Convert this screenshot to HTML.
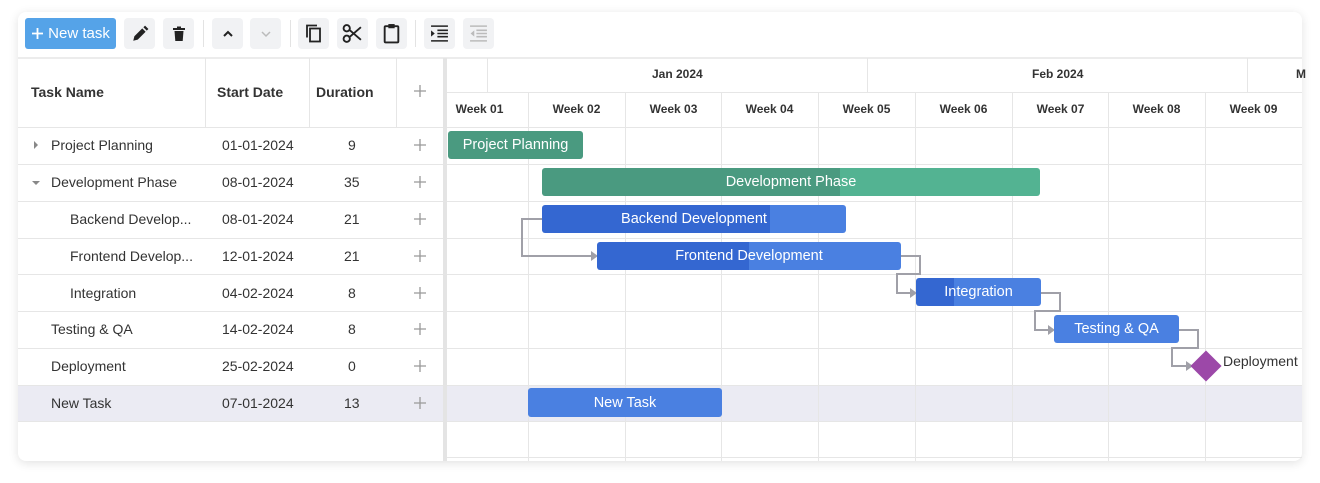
<!DOCTYPE html>
<html><head><meta charset="utf-8"><style>
*{box-sizing:border-box;margin:0;padding:0}
body{width:1320px;height:483px;background:#fff;font-family:"Liberation Sans",sans-serif;color:#333;position:relative;overflow:hidden}
.a{position:absolute}
.card{left:18px;top:12px;width:1284px;height:449px;background:#fff;border-radius:8px;box-shadow:0 2px 10px rgba(0,0,0,.12);overflow:hidden}
.btn{position:absolute;top:18px;width:31px;height:31px;background:#f1f2f4;border-radius:4px;display:flex;align-items:center;justify-content:center}
.sep{position:absolute;top:20px;width:1px;height:27px;background:#e3e3e3}
.hl{position:absolute;height:1px;background:#e6e6e6}
.vl{position:absolute;width:1px;background:#e6e6e6}
.t{position:absolute;font-size:14px;color:#333;white-space:nowrap}
.h{font-weight:bold;font-size:14px}
.wk{position:absolute;top:102px;font-size:12px;font-weight:bold;color:#333;width:97px;text-align:center}
.bar{position:absolute;border-radius:3px;color:#fff;font-size:14.5px;display:flex;align-items:center;justify-content:center;overflow:hidden}
.plus{position:absolute;left:413px;width:14px;height:14px}
</style></head><body>
<div class="a card"></div>
<!-- toolbar -->
<div class="a" style="left:25px;top:18px;width:91px;height:31px;background:#55a3e8;border-radius:3px;color:#fff;font-size:15px;display:flex;align-items:center;justify-content:center"><svg width="13" height="13" viewBox="0 0 13 13" style="margin-right:4px"><path d="M6.5 1v11M1 6.5h11" stroke="#fff" stroke-width="1.8"/></svg>New task</div>
<div class="btn" style="left:124px"><svg width="18" height="18" viewBox="0 0 16 16"><path d="M2 14l1-4 7-7 3 3-7 7z M11 2l1.5-1.5 3 3L14 5z" fill="#222"/></svg></div>
<div class="btn" style="left:163px"><svg width="14" height="18" viewBox="0 0 14 16"><rect x="1" y="2" width="12" height="2" fill="#222"/><rect x="5" y="0.5" width="4" height="2" fill="#222"/><path d="M2.5 5h9l-.8 10h-7.4z" fill="#222"/></svg></div>
<div class="sep" style="left:203px"></div>
<div class="btn" style="left:212px"><svg width="12" height="8" viewBox="0 0 12 8"><path d="M2 6l4-4 4 4" stroke="#222" stroke-width="2" fill="none"/></svg></div>
<div class="btn" style="left:250px"><svg width="12" height="8" viewBox="0 0 12 8"><path d="M2 2l4 4 4-4" stroke="#bbb" stroke-width="1.5" fill="none"/></svg></div>
<div class="sep" style="left:290px"></div>
<div class="btn" style="left:298px"><svg width="18" height="21" viewBox="0 0 18 20"><rect x="5" y="5" width="10" height="13" fill="none" stroke="#222" stroke-width="1.8"/><path d="M2 14V2h10" fill="none" stroke="#222" stroke-width="1.8"/></svg></div>
<div class="btn" style="left:337px"><svg width="21" height="19" viewBox="0 0 20 18"><circle cx="4.5" cy="4" r="3" fill="none" stroke="#222" stroke-width="1.8"/><circle cx="4.5" cy="14" r="3" fill="none" stroke="#222" stroke-width="1.8"/><path d="M7 5.5L18 15M7 12.5L18 3" stroke="#222" stroke-width="1.8"/></svg></div>
<div class="btn" style="left:376px"><svg width="17" height="21" viewBox="0 0 16 20"><rect x="1.5" y="3" width="13" height="15.5" rx="1" fill="none" stroke="#222" stroke-width="1.8"/><rect x="5" y="1" width="6" height="4" fill="#222"/></svg></div>
<div class="sep" style="left:415px"></div>
<div class="btn" style="left:424px"><svg width="19" height="17" viewBox="0 0 18 16"><path d="M1 1h16M7 5h10M7 8h10M7 11h10M1 15h16" stroke="#222" stroke-width="1.5"/><path d="M1 5l3.5 3L1 11z" fill="#222"/></svg></div>
<div class="btn" style="left:463px"><svg width="19" height="17" viewBox="0 0 18 16"><path d="M1 1h16M7 5h10M7 8h10M7 11h10M1 15h16" stroke="#bbb" stroke-width="1.5"/><path d="M5 5L1.5 8 5 11z" fill="#bbb"/></svg></div>
<!-- grid lines -->
<div class="hl" style="left:18px;top:57px;width:1284px;height:2px;background:#ececec"></div>
<div class="hl" style="left:18px;top:127px;width:1284px"></div>
<div class="hl" style="left:447px;top:92px;width:855px"></div>
<div class="a" style="left:18px;top:385px;width:1284px;height:36px;background:#ebebf3"></div>
<div class="hl" style="left:18px;top:164px;width:1284px"></div>
<div class="hl" style="left:18px;top:201px;width:1284px"></div>
<div class="hl" style="left:18px;top:238px;width:1284px"></div>
<div class="hl" style="left:18px;top:274px;width:1284px"></div>
<div class="hl" style="left:18px;top:311px;width:1284px"></div>
<div class="hl" style="left:18px;top:348px;width:1284px"></div>
<div class="hl" style="left:18px;top:385px;width:1284px"></div>
<div class="hl" style="left:18px;top:421px;width:1284px"></div>
<div class="hl" style="left:447px;top:457px;width:855px"></div>
<div class="vl" style="left:205px;top:58px;height:69px"></div>
<div class="vl" style="left:309px;top:58px;height:69px"></div>
<div class="vl" style="left:396px;top:58px;height:69px"></div>
<div class="a" style="left:443px;top:58px;width:4px;height:403px;background:#e4e4e4"></div>
<div class="vl" style="left:487px;top:58px;height:34px"></div>
<div class="vl" style="left:867px;top:58px;height:34px"></div>
<div class="vl" style="left:1247px;top:58px;height:34px"></div>
<div class="vl" style="left:528px;top:92px;height:369px"></div>
<div class="vl" style="left:625px;top:92px;height:369px"></div>
<div class="vl" style="left:721px;top:92px;height:369px"></div>
<div class="vl" style="left:818px;top:92px;height:369px"></div>
<div class="vl" style="left:915px;top:92px;height:369px"></div>
<div class="vl" style="left:1012px;top:92px;height:369px"></div>
<div class="vl" style="left:1108px;top:92px;height:369px"></div>
<div class="vl" style="left:1205px;top:92px;height:369px"></div>
<!-- headers -->
<div class="t h" style="left:31px;top:84px">Task Name</div>
<div class="t h" style="left:217px;top:84px">Start Date</div>
<div class="t h" style="left:316px;top:84px">Duration</div>
<svg class="plus" style="top:84px" viewBox="0 0 14 14"><path d="M7 1v12M1 7h12" stroke="#999" stroke-width="1.3"/></svg>
<div class="t" style="left:652px;top:67px;font-size:12px;font-weight:bold">Jan 2024</div>
<div class="t" style="left:1032px;top:67px;font-size:12px;font-weight:bold">Feb 2024</div>
<div class="t" style="left:1296px;top:67px;font-size:12px;font-weight:bold">M</div>
<div class="wk" style="left:447px;width:65px">Week 01</div>
<div class="wk" style="left:528px">Week 02</div>
<div class="wk" style="left:625px">Week 03</div>
<div class="wk" style="left:721px">Week 04</div>
<div class="wk" style="left:818px">Week 05</div>
<div class="wk" style="left:915px">Week 06</div>
<div class="wk" style="left:1012px">Week 07</div>
<div class="wk" style="left:1108px">Week 08</div>
<div class="wk" style="left:1205px">Week 09</div>
<!-- rows -->
<svg class="a" style="left:32px;top:140px" width="8" height="10"><path d="M2 1l4 4-4 4z" fill="#888"/></svg>
<svg class="a" style="left:31px;top:179px" width="10" height="8"><path d="M1 2l4 4 4-4z" fill="#888"/></svg>
<div class="t" style="left:51px;top:137px">Project Planning</div>
<div class="t" style="left:51px;top:174px">Development Phase</div>
<div class="t" style="left:70px;top:211px">Backend Develop...</div>
<div class="t" style="left:70px;top:248px">Frontend Develop...</div>
<div class="t" style="left:70px;top:285px">Integration</div>
<div class="t" style="left:51px;top:321px">Testing &amp; QA</div>
<div class="t" style="left:51px;top:358px">Deployment</div>
<div class="t" style="left:51px;top:395px">New Task</div>
<div class="t" style="left:222px;top:137px">01-01-2024</div>
<div class="t" style="left:222px;top:174px">08-01-2024</div>
<div class="t" style="left:222px;top:211px">08-01-2024</div>
<div class="t" style="left:222px;top:248px">12-01-2024</div>
<div class="t" style="left:222px;top:285px">04-02-2024</div>
<div class="t" style="left:222px;top:321px">14-02-2024</div>
<div class="t" style="left:222px;top:358px">25-02-2024</div>
<div class="t" style="left:222px;top:395px">07-01-2024</div>
<div class="t" style="left:348px;top:137px">9</div>
<div class="t" style="left:344px;top:174px">35</div>
<div class="t" style="left:344px;top:211px">21</div>
<div class="t" style="left:344px;top:248px">21</div>
<div class="t" style="left:348px;top:285px">8</div>
<div class="t" style="left:348px;top:321px">8</div>
<div class="t" style="left:348px;top:358px">0</div>
<div class="t" style="left:344px;top:395px">13</div>
<svg class="plus" style="top:138px" viewBox="0 0 14 14"><path d="M7 1v12M1 7h12" stroke="#999" stroke-width="1.3"/></svg>
<svg class="plus" style="top:175px" viewBox="0 0 14 14"><path d="M7 1v12M1 7h12" stroke="#999" stroke-width="1.3"/></svg>
<svg class="plus" style="top:212px" viewBox="0 0 14 14"><path d="M7 1v12M1 7h12" stroke="#999" stroke-width="1.3"/></svg>
<svg class="plus" style="top:249px" viewBox="0 0 14 14"><path d="M7 1v12M1 7h12" stroke="#999" stroke-width="1.3"/></svg>
<svg class="plus" style="top:286px" viewBox="0 0 14 14"><path d="M7 1v12M1 7h12" stroke="#999" stroke-width="1.3"/></svg>
<svg class="plus" style="top:322px" viewBox="0 0 14 14"><path d="M7 1v12M1 7h12" stroke="#999" stroke-width="1.3"/></svg>
<svg class="plus" style="top:359px" viewBox="0 0 14 14"><path d="M7 1v12M1 7h12" stroke="#999" stroke-width="1.3"/></svg>
<svg class="plus" style="top:396px" viewBox="0 0 14 14"><path d="M7 1v12M1 7h12" stroke="#999" stroke-width="1.3"/></svg>
<!-- links -->
<svg class="a" style="left:0;top:0" width="1320" height="483">
<g stroke="#a0a0a8" stroke-width="2" fill="none">
<path d="M542 219H522V256H592"/>
<path d="M901 256H920V274H897V293H911"/>
<path d="M1040 293H1060V311H1035V330H1049"/>
<path d="M1179 330H1198V348H1172V366H1188"/>
</g>
<g fill="#a0a0a8"><path d="M591 251l7 5-7 5z"/><path d="M910 288l7 5-7 5z"/><path d="M1048 325l7 5-7 5z"/><path d="M1186 361l7 5-7 5z"/></g>
<rect x="1195" y="355" width="22" height="22" fill="#9c48a8" transform="rotate(45 1206 366)"/>
</svg>
<div class="t" style="left:1223px;top:353px">Deployment</div>
<!-- bars -->
<div class="bar" style="left:448px;top:131px;width:135px;height:28px;background:#4a9a80">Project Planning</div>
<div class="bar" style="left:542px;top:168px;width:498px;height:28px;background:linear-gradient(90deg,#4a9a80 0,#4a9a80 298px,#53b392 298px)">Development Phase</div>
<div class="bar" style="left:542px;top:205px;width:304px;height:28px;background:linear-gradient(90deg,#3467d1 0,#3467d1 228px,#4a80e1 228px)">Backend Development</div>
<div class="bar" style="left:597px;top:242px;width:304px;height:28px;background:linear-gradient(90deg,#3467d1 0,#3467d1 152px,#4a80e1 152px)">Frontend Development</div>
<div class="bar" style="left:916px;top:278px;width:125px;height:28px;background:linear-gradient(90deg,#3467d1 0,#3467d1 38px,#4a80e1 38px)">Integration</div>
<div class="bar" style="left:1054px;top:315px;width:125px;height:28px;background:#4a80e1">Testing &amp; QA</div>
<div class="bar" style="left:528px;top:388px;width:194px;height:29px;background:#4a80e1">New Task</div>
</body></html>
